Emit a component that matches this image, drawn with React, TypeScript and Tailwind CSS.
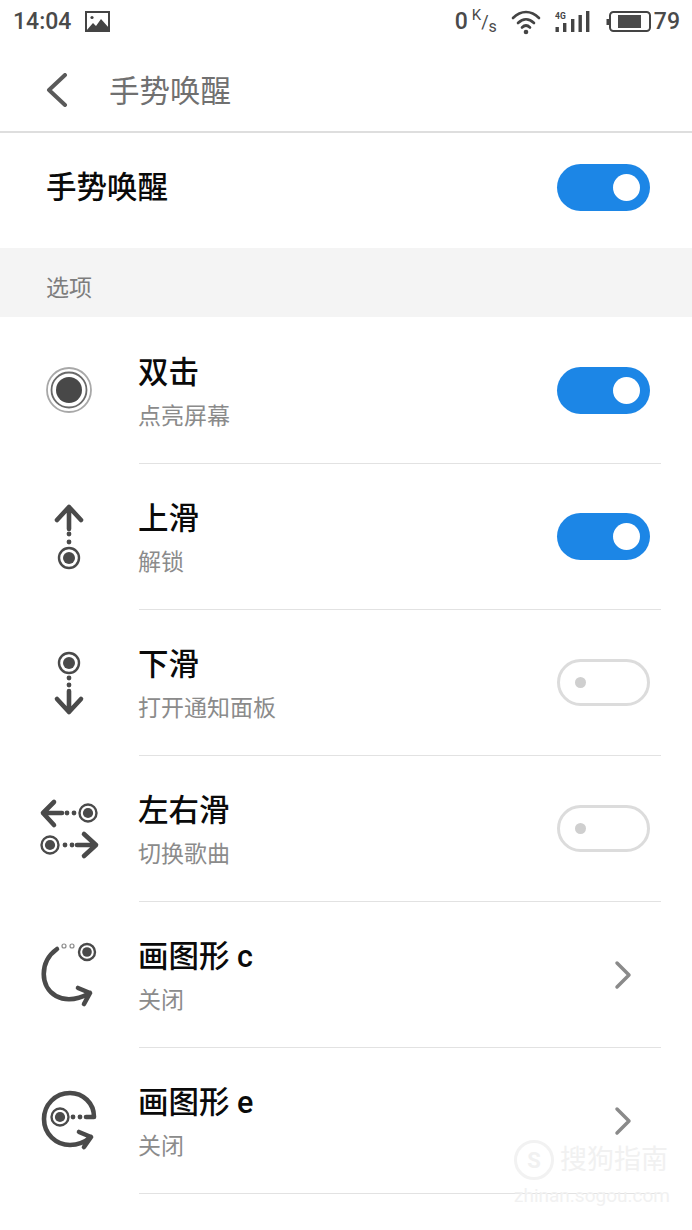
const FONT = "font-['Roboto','Noto_Sans_CJK_SC',sans-serif]";

function Toggle({ on }: { on: boolean }) {
  if (on) {
    return (
      <div className="flex h-[47px] w-[93px] shrink-0 items-center justify-end rounded-full bg-[#1c86e6] pr-[10px]">
        <div className="h-[27px] w-[27px] rounded-full bg-white" />
      </div>
    );
  }
  return (
    <div className="flex h-[47px] w-[93px] shrink-0 items-center rounded-full border-[3px] border-[#dcdcdc] bg-white pl-[15px]">
      <div className="h-[11px] w-[11px] rounded-full bg-[#cfcfcf]" />
    </div>
  );
}

function Target({ x, y, r = 10 }: { x: number; y: number; r?: number }) {
  return (
    <>
      <circle cx={x} cy={y} r={r} fill="none" stroke="#4a4a4a" strokeWidth="2.4" />
      <circle cx={x} cy={y} r={r * 0.6} fill="#4a4a4a" />
    </>
  );
}

function Dots({ pts }: { pts: number[][] }) {
  return (
    <>
      {pts.map(([x, y]) => (
        <circle key={`${x}-${y}`} cx={x} cy={y} r="2.4" fill="#4a4a4a" />
      ))}
    </>
  );
}

const line = { fill: 'none', stroke: '#4a4a4a', strokeWidth: 4.6, strokeLinecap: 'round', strokeLinejoin: 'round' } as const;

function GestureIcon({ kind }: { kind: string }) {
  return (
    <svg width="80" height="100" viewBox="0 0 80 100" className="shrink-0">
      {kind === 'tap' && (
        <>
          <circle cx="40" cy="49" r="22" fill="none" stroke="#a8a8a8" strokeWidth="1.8" />
          <circle cx="40" cy="49" r="17.5" fill="none" stroke="#6a6a6a" strokeWidth="1.8" />
          <circle cx="40" cy="49" r="13" fill="#484848" />
        </>
      )}
      {kind === 'up' && (
        <>
          <path d="M40 20V42M28 33L40 20L52 33" {...line} />
          <Dots pts={[[40, 47], [40, 55]]} />
          <Target x={40} y={71} />
        </>
      )}
      {kind === 'down' && (
        <>
          <Target x={40} y={30} />
          <Dots pts={[[40, 45], [40, 52]]} />
          <path d="M40 58V79M28 66L40 79L52 66" {...line} />
        </>
      )}
      {kind === 'lr' && (
        <>
          <path d="M33 34H14M25 23L14 34L25 46" {...line} />
          <Dots pts={[[38, 34], [45, 34]]} />
          <Target x={59} y={34} r={8.5} />
          <Target x={21} y={66} r={8.5} />
          <Dots pts={[[36, 66], [43, 66]]} />
          <path d="M48 66H67M55 55L67 66L55 77" {...line} />
        </>
      )}
      {kind === 'c' && (
        <>
          <circle cx="35" cy="21" r="2" fill="none" stroke="#8a8a8a" strokeWidth="1.2" />
          <circle cx="43" cy="21" r="2" fill="none" stroke="#8a8a8a" strokeWidth="1.2" />
          <Target x={58} y={27} r={8} />
          <path d="M28 24C10 37 11 62 27 71C38 77 50 74 61 68M49 63L61 68L55 79" {...line} />
        </>
      )}
      {kind === 'e' && (
        <>
          <Target x={31} y={46} r={8.5} />
          <Dots pts={[[44, 46], [51, 46]]} />
          <path d="M57 46H65C65 32 54 22 41 22C26 22 15 34 15 48C15 63 27 74 41 74C49 74 56 71 62 66M50 61L62 66L55 76" {...line} />
        </>
      )}
    </svg>
  );
}

function Row({ icon, title, sub, toggle }: { icon: string; title: string; sub: string; toggle?: boolean }) {
  return (
    <div className="flex h-[146px] pl-[29px]">
      <div className="flex w-[110px] shrink-0 items-center">
        <GestureIcon kind={icon} />
      </div>
      <div className="mr-[31px] flex flex-1 items-center border-b border-[#e2e2e2] pr-[11px]">
        <div className="-ml-[1px] flex-1 pt-[4px]">
          <div className="text-[30.5px] leading-[40px] font-medium text-[#0a0a0a]">{title}</div>
          <div className="mt-[9px] text-[23px] leading-[30px] text-[#8b8b8b]">{sub}</div>
        </div>
        {toggle === undefined ? (
          <svg width="20" height="30" viewBox="0 0 20 30" className="mr-[17px]">
            <path d="M4 3L16 15L4 27" fill="none" stroke="#8a8a8a" strokeWidth="3.5" strokeLinecap="round" strokeLinejoin="round" />
          </svg>
        ) : (
          <Toggle on={toggle} />
        )}
      </div>
    </div>
  );
}

function StatusBar() {
  return (
    <div className="flex h-[44px] items-center justify-between pb-[1px] pl-[13px] pr-[12px] text-[#4a4a4a]">
      <div className="flex items-center gap-[14px]">
        <span className="text-[23px] font-medium leading-none">14:04</span>
        <svg width="25" height="21" viewBox="0 0 25 21">
          <rect x="1" y="1" width="23" height="19" fill="none" stroke="#444" strokeWidth="2" />
          <circle cx="7" cy="6.5" r="1.6" fill="#444" />
          <path d="M1 20L8 12L11 15L16 8L24 17V20Z" fill="#444" />
        </svg>
      </div>
      <div className="flex items-center">
        <span className="text-[23px] font-medium leading-none">0</span>
        <span className="ml-[4px] mr-[14px] text-[18px] leading-none">
          <sup className="text-[15px]">K</sup>/<sub className="text-[16px]">s</sub>
        </span>
        <svg width="30" height="26" viewBox="0 0 30 26" className="mr-[14px]">
          <path d="M2 9C10 1 20 1 28 9M7 14C12 9 18 9 23 14M11 18.5C13.5 16 16.5 16 19 18.5" fill="none" stroke="#444" strokeWidth="2.6" strokeLinecap="round" />
          <circle cx="15" cy="23" r="2.3" fill="#444" />
        </svg>
        <svg width="36" height="24" viewBox="0 0 36 24" className="mr-[15px]">
          <rect x="0.5" y="17" width="3.4" height="5" fill="#444" />
          <rect x="8" y="13" width="3.4" height="9" fill="#444" />
          <rect x="16" y="9" width="3.4" height="13" fill="#444" />
          <rect x="23.5" y="5" width="3.4" height="17" fill="#444" />
          <rect x="31" y="1" width="3.4" height="21" fill="#444" />
          <text x="0" y="9" fontSize="8.5" fontWeight="700" fill="#444">4G</text>
        </svg>
        <svg width="46" height="23" viewBox="0 0 46 23">
          <rect x="0.5" y="9" width="2.5" height="6" fill="#444" />
          <rect x="4" y="2" width="40" height="19" rx="3.5" fill="none" stroke="#444" strokeWidth="2" />
          <rect x="12" y="5" width="23" height="13" fill="#4a4a4a" />
        </svg>
        <span className="ml-[2px] text-[23px] font-medium leading-none">79</span>
      </div>
    </div>
  );
}

export default function App() {
  return (
    <div className={`relative h-[1230px] w-[692px] overflow-hidden bg-white ${FONT}`}>
      <StatusBar />
      <div className="flex h-[89px] items-center border-b-2 border-[#dedede] pl-[46px] pt-[4px]">
        <svg width="22" height="34" viewBox="0 0 22 34" className="mt-[1px]">
          <path d="M19 2L3 17L19 32" fill="none" stroke="#5a5a5a" strokeWidth="4" strokeLinecap="round" strokeLinejoin="round" />
        </svg>
        <span className="ml-[41px] mt-[5px] text-[30.5px] leading-none text-[#707070]">手势唤醒</span>
      </div>
      <div className="flex h-[115px] items-center justify-between pb-[6px] pl-[46px] pr-[42px]">
        <span className="pt-[2px] text-[30.5px] font-medium leading-none text-[#0a0a0a]">手势唤醒</span>
        <Toggle on />
      </div>
      <div className="flex h-[69px] items-center bg-[#f4f4f4] pl-[46px] pt-[13px] text-[23px] text-[#7d7d7d]">选项</div>
      <div className="pt-[1px]">
        <Row icon="tap" title="双击" sub="点亮屏幕" toggle />
        <Row icon="up" title="上滑" sub="解锁" toggle />
        <Row icon="down" title="下滑" sub="打开通知面板" toggle={false} />
        <Row icon="lr" title="左右滑" sub="切换歌曲" toggle={false} />
        <Row icon="c" title="画图形 c" sub="关闭" />
        <Row icon="e" title="画图形 e" sub="关闭" />
      </div>
      {/* watermark */}
      <div className="absolute bottom-[25px] left-[514px] flex flex-col text-[#f1f1f1]">
        <div className="flex items-center gap-[6px]">
          <div className="flex h-[40px] w-[40px] items-center justify-center rounded-full border-[3px] border-[#f2f2f2] text-[22px] font-bold">S</div>
          <span className="text-[27px] leading-none">搜狗指南</span>
        </div>
        <span className="mt-[6px] text-[19px] leading-none">zhinan.sogou.com</span>
      </div>
    </div>
  );
}
